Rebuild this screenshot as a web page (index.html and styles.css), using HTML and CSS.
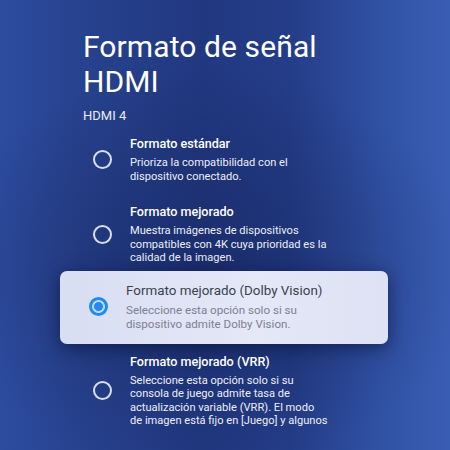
FILE: index.html
```html
<!DOCTYPE html>
<html lang="es">
<head>
    <meta charset="UTF-8">
    <meta name="viewport" content="width=device-width, initial-scale=1.0">
    <title>Formato de señal HDMI</title>
    <link rel="stylesheet" href="styles.css">
</head>
<body>
    <div class="panel">
        <h1 class="title">Formato de señal HDMI</h1>
        <div class="subtitle">HDMI 4</div>

        <div class="options">
            <div class="option">
                <span class="radio"></span>
                <div class="option-text">
                    <div class="option-name">Formato estándar</div>
                    <div class="option-desc">Prioriza la compatibilidad con el<br>dispositivo conectado.</div>
                </div>
            </div>

            <div class="option">
                <span class="radio"></span>
                <div class="option-text">
                    <div class="option-name">Formato mejorado</div>
                    <div class="option-desc">Muestra imágenes de dispositivos<br>compatibles con 4K cuya prioridad es la<br>calidad de la imagen.</div>
                </div>
            </div>

            <div class="option option-focused">
                <span class="radio radio-checked"></span>
                <div class="option-text">
                    <div class="option-name">Formato mejorado (Dolby Vision)</div>
                    <div class="option-desc">Seleccione esta opción solo si su<br>dispositivo admite Dolby Vision.</div>
                </div>
            </div>

            <div class="option">
                <span class="radio"></span>
                <div class="option-text">
                    <div class="option-name">Formato mejorado (VRR)</div>
                    <div class="option-desc">Seleccione esta opción solo si su<br>consola de juego admite tasa de<br>actualización variable (VRR). El modo<br>de imagen está fijo en [Juego] y algunos</div>
                </div>
            </div>
        </div>
    </div>
</body>
</html>
```

FILE: styles.css
```css
html, body { height: 100%; }
body {
    margin: 0;
    overflow: hidden;
    font-family: Roboto, "Noto Sans", Arial, sans-serif;
    color: #fff;
    background:
        radial-gradient(ellipse 60% 45% at 45% 60%, rgba(18, 30, 80, 0.45), rgba(18, 30, 80, 0) 100%),
        linear-gradient(to right, #2d4c9f 0%, #27428e 18%, #213881 45%, #243d88 65%, #3152a5 85%, #3a5db4 100%);
}

.panel { padding: 29px 0 0 83px; }

.title {
    margin: 0;
    width: 250px;
    font-size: 30px;
    line-height: 35px;
    font-weight: 400;
    letter-spacing: 0.1px;
}
.subtitle {
    margin-top: 9px;
    font-size: 13px;
    line-height: 16px;
    color: #e8ebf6;
}

.options { margin-top: 12px; display: flex; flex-direction: column; gap: 21px; }

.option { display: flex; align-items: center; gap: 18px; padding-left: 10px; }
.option-text { display: flex; flex-direction: column; gap: 4px; }
.option-name { font-size: 12.6px; line-height: 16px; font-weight: 500; }
.option-desc { font-size: 11.1px; line-height: 13.5px; color: #eceef7; }

.radio {
    flex: none;
    width: 15px;
    height: 15px;
    border: 2px solid #d9ddf1;
    border-radius: 50%;
}

/* highlighted row: light card that pops out of the list */
.option-focused {
    box-sizing: border-box;
    align-self: flex-start;
    width: 328px;
    margin: -15px 0 -11px -23px;
    padding: 12px 20px 13px 29px;
    gap: 18px;
    border-radius: 7px;
    background: linear-gradient(to right, #d8def3, #e4e8f7 60%, #dde2f4);
    box-shadow: 0 4px 18px rgba(5, 12, 45, 0.55);
}
.option-focused .option-name { font-weight: 400; font-size: 13.4px; color: #3b3f4f; }
.option-focused .option-desc { font-size: 11.6px; line-height: 14px; color: #7c8193; }

.radio-checked {
    width: 13px;
    height: 13px;
    border: 3px solid #1f8bf2;
    background: radial-gradient(circle, #1f8bf2 0 5px, transparent 5.6px);
    position: relative;
}
.radio-checked::after {
    content: "";
    position: absolute;
    inset: 1px;
    border-radius: 50%;
    border: 1.5px solid #e2e7f7;
}
```
